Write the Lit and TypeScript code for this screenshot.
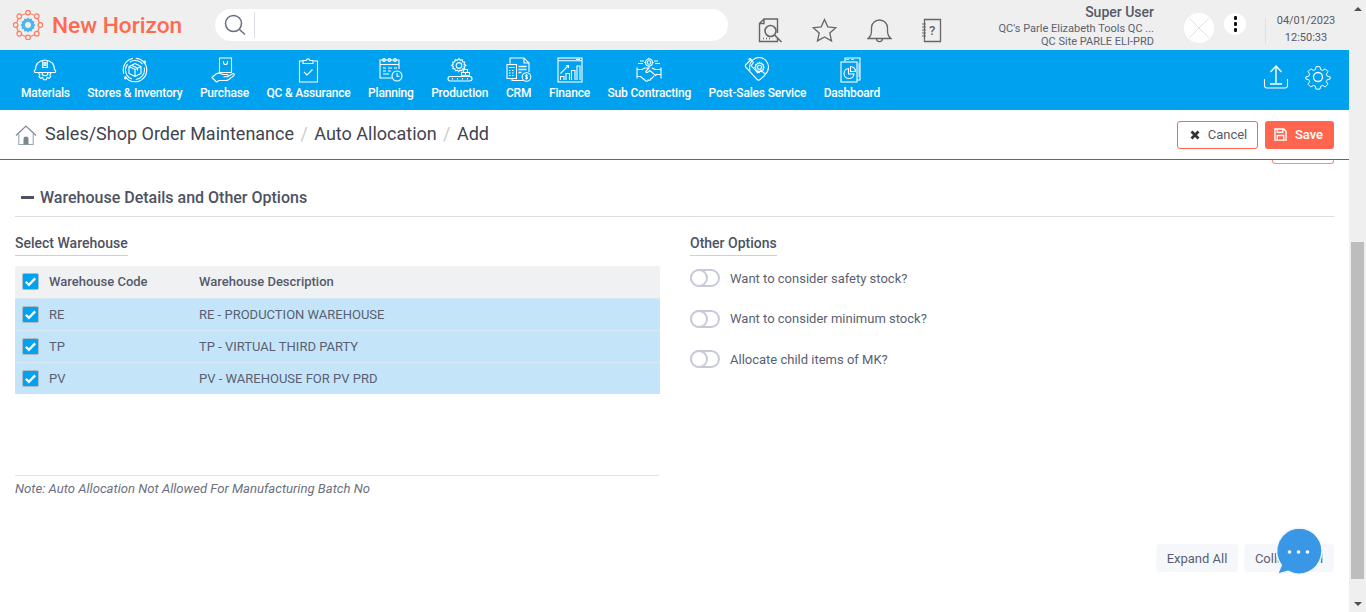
import { css, html, LitElement, svg } from "lit";
import { customElement } from "lit/decorators.js";

// nav icons share a 26x26 box, white 1.1 stroke
const navIcons = {
  materials: svg`<path d="M3 15.500c-1-0.300-1-2.500 0.500-2.800 0-5 2.500-9 9.500-9.700 7 0.700 9.500 4.700 9.500 9.700 1.500 0.300 1.500 2.500 0.500 2.800z"/><path d="M10.700 3.200v7.300h4.600v-7.300M12.200 5.500h1.600v3h-1.600z"/><path d="M6.500 15.800l1.400 2.200-1 1.700 1.800 1.700 1.800-1 1 2.400h2.800l0.900-2.400 1.900 1 1.700-1.700-1-1.700 1.400-2.200M10 15.800a3 3 0 0 0 6 0"/>`,
  stores: svg`<circle cx="13" cy="13" r="11.800" stroke-dasharray="30 3 20 3"/><circle cx="13" cy="13" r="9.500" stroke-dasharray="14 4 18 3"/><path d="M13 6.500l6 3v7l-6 3-6-3v-7zM7 9.500l6 3 6-3M13 12.500v7M9.500 8.200l6 3v2.300"/><circle cx="22.500" cy="5" r="0.900" fill="#fff"/><circle cx="3.500" cy="21" r="0.900" fill="#fff"/>`,
  purchase: svg`<path d="M8.500 1h12v14.500h-12z"/><path d="M12.500 4v1.500a2 2 0 0 0 4 0V4"/><path d="M1 20.500l4-3.500c1.500-1 3-1.200 4.500-0.500l2.500 1h4c1.500 0 1.500 2.200 0 2.200h-3.500l4 0 5-3c1.500-0.600 2.500 0.800 1.300 2l-5.300 4c-1 0.600-1.800 0.800-3 0.800h-6.500l-2.500 1.500z"/>`,
  qc: svg`<path d="M8 4h-3.500v21h18v-21h-3.500"/><path d="M8 6.500v-3h3.200c0.500-2.200 3.100-2.200 3.600 0h3.200v3z"/><path d="M9 15l3 3 5.500-5.500"/>`,
  planning: svg`<path d="M14 21h-12v-18h19v9"/><path d="M2 7.500h19"/><circle cx="6" cy="3" r="1.400"/><circle cx="11.500" cy="3" r="1.400"/><circle cx="17" cy="3" r="1.400"/><path d="M5 11h3M10 11h4M16 11h3M5 14h3M10 14h3M5 17h6"/><circle cx="19" cy="19" r="5"/><path d="M19 16v3.200h2.500"/>`,
  production: svg`<path d="M12 1.500l1.200 1.800 2-0.600 0.400 2.100 2.100 0.400-0.600 2 1.800 1.200-1.800 1.200 0.400 1.900-2 0.500-0.700 1.900-1.900-0.700-1.200 1.500-1.200-1.500-1.900 0.700-0.700-1.900-2-0.500 0.400-1.900-1.800-1.200 1.800-1.200-0.600-2 2.100-0.400 0.400-2.100 2 0.600z"/><circle cx="12" cy="8.400" r="2.800"/><path d="M14.500 15.500h4v3h-4zM18.500 15.500h4v3h-4zM16.500 12.500h4v3h-4z"/><rect x="1" y="19.500" width="24" height="4.500" rx="2.200"/><path d="M5 21.800h1M10 21.800h1M15 21.800h1M20 21.800h1" stroke-width="1.400"/>`,
  crm: svg`<path d="M4 6.500v-5.500h14l5 5v9M18 1v5h5"/><path d="M17 23.500h-11v-2"/><rect x="1" y="7.500" width="9.500" height="14" fill="#00a2ef"/><path d="M3 10.500h5.500M3 13.500h1.500M6 13.500h1.500M3 16h1.500M6 16h1.500M3 18.500h1.500M6 18.500h1.500"/><path d="M12.500 9.500h8M12.500 12.500h8M12.500 15.500h3" stroke-width="1.300"/><circle cx="20.500" cy="20" r="4.300"/><path d="M21.800 18.300h-2.200v1.600h1.900v1.700h-2.300M20.500 17.200v5.500" stroke-width="0.900"/>`,
  finance: svg`<rect x="1" y="1" width="24" height="24"/><path d="M1 3.800h24M19 2.400h4" /><path d="M3.500 23v-3.500h3.500V23M9 23v-6.500h3.500V23M14.500 23v-9.500H18V23M20 23V9h3v14"/><path d="M3.500 16.500l7.500-7.500M9 8.500h2.500V11"/>`,
  sub: svg`<circle cx="13" cy="5.500" r="3.500"/><circle cx="13" cy="5.500" r="1.800"/><path d="M13 0.800v1.200M13 9v1.200M8.300 5.500h1.200M16.500 5.500h1.200M4 4h4M18 4h4M2 6.500h5M19 6.500h5"/><path d="M1 10.500v11M25 10.500v11M1 12.500h5l3-1.500h4l-3 3c-0.800 1 0.600 2 1.600 1.300l2.400-1.800 5.500 5 1-1h4.500M25 12.500h-6l-3-1.500"/><path d="M1 19.500h3.500l5.500 4.500c1 0.500 2 0 2.200-1l1 0.300c1 0 1.500-0.800 1.400-1.500 1.200 0.200 2-0.600 1.800-1.600 1 0 1.500-0.700 1.300-1.500"/>`,
  post: svg`<circle cx="15" cy="10" r="9.500" stroke-dasharray="40 18" stroke-dashoffset="-26"/><path d="M7 2.500l-5 5c-0.800 0.800-0.800 1.800 0 2.800l11 12c0.900 1 2.200 1 3 0.300l4.500-4c0.800-0.800 0.600-1.700 0-2.200l-2.600-2.200c-0.700-0.500-1.500-0.500-2.100 0l-2 1.700-6.800-7.400 1.800-1.900c0.600-0.700 0.600-1.400 0-2.100l-1.800-2.400c-0.600-0.700-1.300-0.500-2-0.100z"/><path d="M15.500 5.300l0.800 1.200 1.400-0.400 0.400 1.400 1.400 0.400-0.400 1.400 1.100 1-1.100 1 0.400 1.400-1.400 0.400-0.400 1.400-1.400-0.400-0.800 1.200-0.800-1.200-1.400 0.400-0.400-1.400-1.400-0.400 0.400-1.400-1.100-1 1.100-1-0.400-1.400 1.400-0.400 0.400-1.400 1.400 0.400z"/><circle cx="15.500" cy="10.300" r="2"/>`,
  dashboard: svg`<path d="M6 4.500v-3.500h15v22h-3"/><rect x="2" y="5" width="16" height="20"/><path d="M7 2.500h3M12 2.500h3M20 6v14" opacity="0.800"/><path d="M9.500 11.500a5 5 0 1 0 5.500 5.500h-5.500z"/><path d="M11.500 9.500a5 5 0 0 1 5 5h-5z"/>`,
};

const navItems = [
  ["Materials", navIcons.materials],
  ["Stores & Inventory", navIcons.stores],
  ["Purchase", navIcons.purchase],
  ["QC & Assurance", navIcons.qc],
  ["Planning", navIcons.planning],
  ["Production", navIcons.production],
  ["CRM", navIcons.crm],
  ["Finance", navIcons.finance],
  ["Sub Contracting", navIcons.sub],
  ["Post-Sales Service", navIcons.post],
  ["Dashboard", navIcons.dashboard],
] as const;

const warehouses = [
  ["RE", "RE - PRODUCTION WAREHOUSE"],
  ["TP", "TP - VIRTUAL THIRD PARTY"],
  ["PV", "PV - WAREHOUSE FOR PV PRD"],
];

const options = [
  "Want to consider safety stock?",
  "Want to consider minimum stock?",
  "Allocate child items of MK?",
];

const logoDots = [0, 45, 90, 135, 180, 225, 270, 315];

@customElement("app-root")
export class AppRoot extends LitElement {
  private checkbox() {
    return html`<span class="check">
      <svg viewBox="0 0 16 16" width="15" height="15">
        <path d="M3 8.200l3.300 3.300 6.700-6.800" fill="none" stroke="#fff" stroke-width="2.400" />
      </svg>
    </span>`;
  }

  private header() {
    return html`<header class="top">
      <svg class="logo" viewBox="0 0 30 30" width="30" height="30">
        <g fill="none" stroke="#ff7a5f" stroke-width="1.200">
          <circle cx="15" cy="15" r="11.500" />
          ${logoDots.map((a) => {
            const r = (a * Math.PI) / 180;
            return svg`<circle cx=${15 + 12.4 * Math.cos(r)} cy=${15 + 12.4 * Math.sin(r)} r="2.300" fill="#efefef" />`;
          })}
        </g>
        <path
          d="M15 7.500l1.500 1.600 2.100-0.500 0.700 2.100 2.100 0.700-0.500 2.100 1.600 1.500-1.600 1.500 0.500 2.100-2.100 0.700-0.700 2.100-2.100-0.500-1.500 1.600-1.500-1.600-2.100 0.500-0.700-2.100-2.100-0.700 0.500-2.100-1.600-1.500 1.600-1.500-0.500-2.100 2.100-0.700 0.700-2.100 2.100 0.500z"
          fill="#4eb4ee"
        />
        <circle cx="15" cy="15" r="3" fill="#efefef" />
      </svg>
      <span class="brand">New Horizon</span>
      <div class="search">
        <svg viewBox="0 0 22 22" width="22" height="22" fill="none" stroke="#666b80" stroke-width="1.500">
          <circle cx="9.500" cy="9.500" r="8" /><path d="M15.500 15.500l5.500 5" />
        </svg>
        <span class="search-sep"></span>
      </div>
      <div class="tools">
        <svg viewBox="0 0 25 25" width="25" height="25">
          <path d="M1.500 5.500l4.500-4.500h13.500v14M19.500 20v3.500h-18v-18h4.500v-4.500" />
          <circle cx="12.500" cy="13" r="5.500" stroke-width="1.600" />
          <path d="M16.500 17l7 7M5 20.500h1M8 20.500h1M11 20.500h1" stroke-width="1.600" />
        </svg>
        <svg viewBox="0 0 25 25" width="25" height="25">
          <path d="M12.500 1.500l3.300 7.300 7.900 0.900-5.900 5.300 1.700 7.900-7-4-7 4 1.700-7.900-5.900-5.300 7.900-0.900z" stroke-width="1.300" />
        </svg>
        <svg viewBox="0 0 25 25" width="25" height="25">
          <path d="M1 20.500c2.500-2 3.500-4 3.500-7.500v-3c0-4.500 3.500-8 8-8s8 3.500 8 8v3c0 3.500 1 5.500 3.500 7.500z" stroke-width="1.300" />
          <path d="M9.500 20.500c0 4.200 6 4.200 6 0" stroke-width="1.300" />
        </svg>
        <svg viewBox="0 0 21 25" width="21" height="25">
          <path d="M3.500 1.500h16v22h-16z" stroke-width="1.300" />
          <path d="M1 6h4M1 9h4M1 12h4M1 15h4M1 18h4" stroke-width="1.200" />
          <text x="8" y="17" class="qmark">?</text>
        </svg>
      </div>
      <div class="user">
        <div class="user-name">Super User</div>
        <div class="user-line">QC's Parle Elizabeth Tools QC ...</div>
        <div class="user-line">QC Site PARLE ELI-PRD</div>
      </div>
      <svg class="avatar" viewBox="0 0 30 30" width="30" height="30">
        <circle cx="15" cy="15" r="15" fill="#fff" />
        <path d="M5 5l20 20M25 5l-20 20" stroke="#e2e2e2" stroke-width="1" />
      </svg>
      <div class="more"><i></i><i></i><i></i></div>
      <div class="clock">
        <div class="clock-text">
          <div>04/01/2023</div>
          <div>12:50:33</div>
        </div>
      </div>
    </header>`;
  }

  private nav() {
    return html`<nav class="nav">
      ${navItems.map(
        ([label, icon]) => html`<a class="nav-item">
          <svg viewBox="0 0 26 26" width="26" height="26">${icon}</svg>
          <span>${label}</span>
        </a>`
      )}
      <div class="nav-end">
        <svg viewBox="0 0 26 26" width="26" height="26">
          <path d="M1.500 15v6.500a2.500 2.500 0 0 0 2.500 2.500h18a2.500 2.500 0 0 0 2.500-2.500v-6.500" />
          <path d="M13 19.500v-17M7.500 8l5.500-6 5.500 6M7 20h12" stroke-width="1.400" />
        </svg>
        <svg viewBox="0 0 26 26" width="26" height="26">
          <path
            d="M10.800 1.500h4.400l0.700 3.200 2.300 1 2.800-1.800 3.100 3.100-1.800 2.800 1 2.300 3.200 0.700v2.400l-3.200 0.700-1 2.300 1.800 2.800-3.100 3.100-2.800-1.800-2.300 1-0.700 3.200h-4.400l-0.700-3.200-2.300-1-2.800 1.800-3.100-3.100 1.800-2.800-1-2.300-3.200-0.700v-2.400l3.200-0.700 1-2.300-1.800-2.800 3.100-3.100 2.800 1.800 2.300-1z"
            transform="translate(1.300 1.300) scale(0.9)"
          />
          <circle cx="13" cy="13" r="4.500" stroke-width="1.300" />
        </svg>
      </div>
    </nav>`;
  }

  private crumbs() {
    return html`<div class="crumbs">
      <svg viewBox="0 0 22 22" width="22" height="22">
        <path d="M1 11.500l10-9.500 10 9.500" fill="none" stroke="#7a8a90" stroke-width="1.200" />
        <path d="M3.800 10v10.500h14.400v-10.500" fill="none" stroke="#9aa8ad" stroke-width="1.100" />
        <path d="M8.500 20.500v-5.500a2.500 2.500 0 0 1 5 0v5.500z" fill="#76898f" />
      </svg>
      <span>Sales/Shop Order Maintenance</span>
      <b>/</b>
      <span>Auto Allocation</span>
      <b>/</b>
      <span>Add</span>
      <div class="actions">
        <button class="cancel">
          <svg viewBox="0 0 10 10" width="10" height="10">
            <path d="M1.500 1.500l7 7M8.500 1.500l-7 7" stroke="#333" stroke-width="2.800" />
          </svg>
          Cancel
        </button>
        <button class="save">
          <svg viewBox="0 0 14 14" width="13" height="13" fill="none" stroke="#fff" stroke-width="1.500">
            <path d="M1 1h9.500l2.500 2.500v9.500h-12z" />
            <path d="M3.500 1v3.500h6v-3.500" />
            <path d="M3.500 13v-5h7v5" />
          </svg>
          Save
        </button>
      </div>
    </div>`;
  }

  render() {
    return html`<div class="page">
      <main class="main">
        ${this.header()} ${this.nav()} ${this.crumbs()}
        <div class="clipped"></div>
        <section class="content">
          <h2 class="section"><i></i>Warehouse Details and Other Options</h2>
          <div class="cols">
            <div class="left">
              <h3 class="sub"><span>Select Warehouse</span></h3>
              <div class="table">
                <div class="row head">
                  ${this.checkbox()}
                  <span class="code">Warehouse Code</span>
                  <span>Warehouse Description</span>
                </div>
                ${warehouses.map(
                  ([code, desc]) => html`<div class="row">
                    ${this.checkbox()}
                    <span class="code">${code}</span>
                    <span>${desc}</span>
                  </div>`
                )}
              </div>
              <p class="note">Note: Auto Allocation Not Allowed For Manufacturing Batch No</p>
            </div>
            <div class="right">
              <h3 class="sub"><span>Other Options</span></h3>
              ${options.map(
                (o) => html`<label class="opt"><span class="toggle"></span>${o}</label>`
              )}
            </div>
          </div>
          <div class="foot">
            <button class="ghost">Expand All</button>
            <button class="ghost collapse">Collapse All</button>
          </div>
        </section>
      </main>
      <aside class="scroll">
        <span class="arrow up"></span>
        <span class="thumb"></span>
        <span class="arrow down"></span>
      </aside>
      <div class="chat">
        <svg viewBox="0 0 54 54" width="54" height="54">
          <path
            d="M27 3a23 23 0 1 1-11 43.200l-10.500 3 3.800-9.200A23 23 0 0 1 27 3z"
            fill="#3a97e6"
            stroke="#f0f5fb"
            stroke-width="1.500"
          />
          <circle cx="17.500" cy="27" r="1.800" fill="#fff" />
          <circle cx="26.500" cy="27" r="1.800" fill="#fff" />
          <circle cx="35.500" cy="27" r="1.800" fill="#fff" />
        </svg>
      </div>
    </div>`;
  }

  static styles = css`
    :host {
      display: block;
      font-family: Roboto, "Liberation Sans", sans-serif;
      color: #555a6b;
    }

    .page {
      position: relative;
      display: flex;
      height: 612px;
      overflow: hidden;
      background: #fff;
    }

    .main {
      width: 1349px;
      flex: none;
    }

    .scroll {
      width: 17px;
      flex: none;
      display: flex;
      flex-direction: column;
      align-items: center;
      background: #efefef;
    }

    .thumb {
      width: 13px;
      height: 337px;
      margin-top: 231px;
      background: #bdbdbd;
    }

    .arrow {
      width: 0;
      height: 0;
      border-left: 4px solid transparent;
      border-right: 4px solid transparent;
    }

    .arrow.up {
      margin-top: 7px;
      border-bottom: 4px solid #505050;
    }

    .arrow.down {
      margin-top: 23px;
      border-top: 4px solid #505050;
    }

    .top {
      display: flex;
      align-items: center;
      height: 50px;
      background: #efefef;
      box-sizing: border-box;
      padding-left: 13px;
    }

    .brand {
      margin: 1px 0 0 9px;
      width: 163px;
      font-size: 22.700px;
      font-weight: 500;
      color: #ff6a4e;
      white-space: nowrap;
    }

    .search {
      display: flex;
      align-items: center;
      width: 513px;
      height: 32px;
      box-sizing: border-box;
      padding-left: 9px;
      background: #fff;
      border-radius: 16px;
    }

    .search-sep {
      width: 1px;
      height: 26px;
      margin-left: 8px;
      background: #dcdce6;
    }

    .tools {
      display: flex;
      align-items: center;
      gap: 29.500px;
      margin-left: 29.500px;
      padding-top: 10px;
    }

    .tools svg {
      fill: none;
      stroke: #666;
      stroke-width: 1.400;
      flex: none;
    }

    .qmark {
      font-size: 13px;
      font-weight: 500;
      fill: #666;
      stroke: none;
    }

    .user {
      width: 212px;
      margin-top: 1px;
      text-align: right;
      white-space: nowrap;
    }

    .user-name {
      font-size: 14px;
      font-weight: 500;
      line-height: 16px;
      margin-bottom: 2px;
      color: #555a66;
    }

    .user-line {
      font-size: 11px;
      line-height: 13px;
      color: #5c6170;
    }

    .avatar {
      margin: 6px 0 0 30px;
      flex: none;
    }

    .more {
      display: flex;
      flex-direction: column;
      align-items: center;
      justify-content: center;
      gap: 2px;
      width: 22px;
      height: 22px;
      margin: 0 0 2px 10px;
      background: #fff;
      border-radius: 50%;
    }

    .more i {
      width: 3px;
      height: 4px;
      background: #111;
      border-radius: 1px;
    }

    .clock {
      align-self: flex-start;
      width: 80px;
      height: 26px;
      margin: 18px 0 0 19px;
      border-left: 1px solid #e0e0e0;
      font-size: 11px;
      line-height: 17px;
      text-align: center;
      color: #555a66;
    }

    .clock-text {
      margin-top: -6px;
    }

    .nav {
      display: flex;
      align-items: flex-start;
      gap: 17.400px;
      height: 60px;
      box-sizing: border-box;
      padding: 7px 18px 0 21px;
      background: #00a2ef;
    }

    .nav svg {
      fill: none;
      stroke: #fff;
      stroke-width: 1.100;
      flex: none;
    }

    .nav-item {
      display: flex;
      flex-direction: column;
      align-items: center;
      gap: 3px;
      color: #fff;
      font-size: 12px;
      font-weight: 500;
      letter-spacing: -0.170px;
      line-height: 14px;
      white-space: nowrap;
    }

    .nav-end {
      display: flex;
      gap: 16px;
      margin: 7px 0 0 auto;
    }

    .crumbs {
      display: flex;
      align-items: center;
      height: 49px;
      padding: 0 15px;
      border-bottom: 1px solid #666;
      font-size: 18px;
      color: #41454f;
      white-space: nowrap;
    }

    .crumbs > svg {
      margin-right: 8px;
      flex: none;
    }

    .crumbs > span {
      margin-bottom: 2px;
    }

    .crumbs b {
      font-weight: 400;
      color: #ccc;
      margin: 0 6.400px 2px;
    }

    .actions {
      display: flex;
      gap: 7px;
      margin-left: auto;
    }

    button {
      display: flex;
      align-items: center;
      justify-content: center;
      gap: 8px;
      height: 28px;
      border-radius: 3px;
      font-family: inherit;
      font-size: 13px;
      padding: 0;
    }

    .cancel {
      width: 81px;
      padding-left: 2px;
      background: #fff;
      border: 1px solid #ff664d;
      color: #555a66;
    }

    .save {
      width: 69px;
      padding-right: 2px;
      background: #ff664d;
      border: 0;
      color: #fff;
      font-weight: 500;
    }

    .clipped {
      width: 60px;
      height: 3px;
      margin-left: 1272px;
      border: 1px solid #ff8a75;
      border-top: 0;
      border-radius: 0 0 3px 3px;
    }

    .content {
      padding: 0 15px;
    }

    .section {
      display: flex;
      align-items: center;
      gap: 6px;
      height: 53px;
      box-sizing: border-box;
      margin: 0;
      padding: 14px 0 0 6px;
      border-bottom: 1px solid #dedede;
      font-size: 16px;
      font-weight: 500;
      color: #4d5262;
    }

    .section i {
      width: 13px;
      height: 3px;
      background: #4d5262;
    }

    .cols {
      display: flex;
      gap: 30px;
    }

    .left {
      width: 645px;
    }

    .sub {
      margin: 16px 0 10px;
      font-size: 14px;
      font-weight: 500;
      line-height: 20px;
      color: #4d5262;
    }

    .sub span {
      display: inline-block;
      border-bottom: 1px solid #cfd0d8;
      padding-bottom: 2px;
    }

    .table {
      height: 209px;
      font-size: 13px;
    }

    .row {
      display: flex;
      align-items: center;
      height: 32px;
      box-sizing: border-box;
      padding-left: 7px;
      background: #c4e5f9;
      border-top: 1px solid #d9e9f3;
      color: #5a5f70;
    }

    .row.head {
      padding-bottom: 1px;
      background: #f0f1f3;
      border-top: 0;
      font-weight: 500;
      color: #555a6b;
      border-radius: 2px 2px 0 0;
    }

    .code {
      width: 150px;
      margin-left: 10px;
    }

    .check {
      display: flex;
      width: 17px;
      height: 17px;
      box-sizing: border-box;
      background: #00a2ef;
      border: 1px solid #a9bcc9;
      border-radius: 2px;
    }

    .note {
      width: 644px;
      margin: 0;
      padding-top: 5px;
      border-top: 1px solid #e2e2e2;
      font-size: 13.100px;
      line-height: 16px;
      font-style: italic;
      color: #6b7080;
    }

    .opt {
      display: flex;
      align-items: center;
      gap: 10px;
      height: 18px;
      margin-bottom: 22.500px;
      font-size: 13px;
      color: #5a5f70;
    }

    .opt:first-of-type {
      margin-top: 13px;
    }

    .toggle {
      position: relative;
      width: 30px;
      height: 18px;
      box-sizing: border-box;
      border: 2px solid #c8cad8;
      border-radius: 9px;
    }

    .toggle::before {
      content: "";
      position: absolute;
      left: -2px;
      top: -2px;
      width: 14px;
      height: 14px;
      border: 2px solid #c8cad8;
      border-radius: 50%;
      background: #fff;
    }

    .foot {
      display: flex;
      justify-content: flex-end;
      gap: 6px;
      margin-top: 47px;
    }

    .ghost {
      width: 82px;
      background: #f5f7fa;
      border: 0;
      border-radius: 4px;
      color: #5a5f70;
    }

    .collapse {
      width: 90px;
    }

    .chat {
      position: absolute;
      left: 1272px;
      top: 525px;
      width: 54px;
      height: 54px;
    }
  `;
}

declare global {
  interface HTMLElementTagNameMap {
    "app-root": AppRoot;
  }
}
